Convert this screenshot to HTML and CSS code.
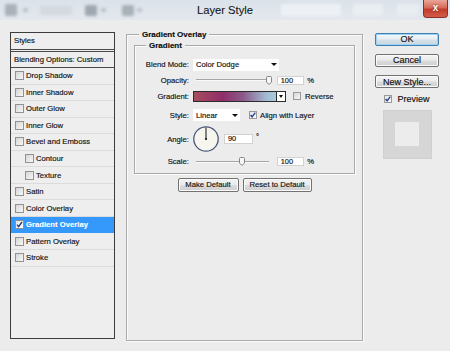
FILE: index.html
```html
<!DOCTYPE html>
<html>
<head>
<meta charset="utf-8">
<title>Layer Style</title>
<link rel="stylesheet" href="styles.css">
</head>
<body>
<div class="titlebar">
  <div class="tb-left">
    <span class="blob b1"></span><span class="blob b2"></span><span class="blob b3"></span><span class="blob b4"></span><span class="blob b5"></span><span class="blob b6"></span><span class="blob b7"></span>
  </div>
  <div class="title">Layer Style</div>
  <div class="tb-right">
    <span class="glow g1"></span><span class="glow g2"></span><span class="glow g3"></span>
    <div class="close">x</div>
  </div>
</div>

<div class="main">
  <div class="styles-panel">
    <div class="sp-head">Styles</div>
    <div class="sp-blend">Blending Options: Custom</div>
    <ul class="sp-list">
      <li class="sp-item"><span class="cb"></span>Drop Shadow</li>
      <li class="sp-item"><span class="cb"></span>Inner Shadow</li>
      <li class="sp-item"><span class="cb"></span>Outer Glow</li>
      <li class="sp-item"><span class="cb"></span>Inner Glow</li>
      <li class="sp-item"><span class="cb"></span>Bevel and Emboss</li>
      <li class="sp-item sub"><span class="cb"></span>Contour</li>
      <li class="sp-item sub"><span class="cb"></span>Texture</li>
      <li class="sp-item"><span class="cb"></span>Satin</li>
      <li class="sp-item"><span class="cb"></span>Color Overlay</li>
      <li class="sp-item sel"><span class="cb on"><svg width="9" height="9" viewBox="0 0 9 9"><path d="M2 4.6 L3.6 6.6 L7 2" fill="none" stroke="#23398a" stroke-width="1.4"/></svg></span>Gradient Overlay</li>
      <li class="sp-item"><span class="cb"></span>Pattern Overlay</li>
      <li class="sp-item"><span class="cb"></span>Stroke</li>
    </ul>
  </div>

  <fieldset class="group outer">
    <legend>Gradient Overlay</legend>
    <fieldset class="group inner">
      <legend>Gradient</legend>
      <div class="frow r1">
        <span class="flabel">Blend Mode:</span>
        <div class="select blend"><span>Color Dodge</span><span class="arrow"></span></div>
      </div>
      <div class="frow r2">
        <span class="flabel">Opacity:</span>
        <div class="slider"><span class="track"></span><span class="thumb" style="left:95.4%"><svg width="6" height="9" viewBox="0 0 6 9"><path d="M0.5 1.5 Q0.5 0.5 1.5 0.5 H4.5 Q5.5 0.5 5.5 1.5 V6.2 L3 8.4 L0.5 6.2 Z" fill="#f6f6f6" stroke="#7a7a7a" stroke-width="0.9"/></svg></span></div>
        <span class="num">100</span><span class="unit">%</span>
      </div>
      <div class="frow r3">
        <span class="flabel">Gradient:</span>
        <div class="grad"></div><div class="grad-drop"><span class="arrow"></span></div>
        <span class="cb small rev"></span><span class="cbl">Reverse</span>
      </div>
      <div class="frow r4">
        <span class="flabel">Style:</span>
        <div class="select style"><span>Linear</span><span class="arrow"></span></div>
        <span class="cb small on align"><svg width="8" height="8" viewBox="0 0 8 8"><path d="M1.6 4 L3.1 5.9 L6.3 1.6" fill="none" stroke="#23398a" stroke-width="1.3"/></svg></span><span class="cbl">Align with Layer</span>
      </div>
      <div class="frow r5">
        <span class="flabel">Angle:</span>
        <svg class="dial" width="26" height="26" viewBox="0 0 26 26"><circle cx="13" cy="13" r="12.2" fill="#f6f6ee" stroke="#4b587a" stroke-width="1.3"/><line x1="13" y1="13" x2="13" y2="1.6" stroke="#111" stroke-width="1"/><circle cx="13" cy="13" r="1.1" fill="#111"/></svg>
        <span class="num angle">90</span><span class="deg">°</span>
      </div>
      <div class="frow r6">
        <span class="flabel">Scale:</span>
        <div class="slider"><span class="track"></span><span class="thumb" style="left:61%"><svg width="6" height="9" viewBox="0 0 6 9"><path d="M0.5 1.5 Q0.5 0.5 1.5 0.5 H4.5 Q5.5 0.5 5.5 1.5 V6.2 L3 8.4 L0.5 6.2 Z" fill="#f6f6f6" stroke="#7a7a7a" stroke-width="0.9"/></svg></span></div>
        <span class="num">100</span><span class="unit">%</span>
      </div>
    </fieldset>
    <div class="btnrow">
      <button class="btn md">Make Default</button>
      <button class="btn rd">Reset to Default</button>
    </div>
  </fieldset>

  <div class="side">
    <button class="btn big ok">OK</button>
    <button class="btn big">Cancel</button>
    <button class="btn big">New Style...</button>
    <div class="preview"><span class="cb small on"><svg width="8" height="8" viewBox="0 0 8 8"><path d="M1.6 4 L3.1 5.9 L6.3 1.6" fill="none" stroke="#23398a" stroke-width="1.3"/></svg></span><span>Preview</span></div>
    <div class="swatch"><div class="swatch-inner"></div></div>
  </div>
</div>
</body>
</html>
```

FILE: styles.css
```css
* { box-sizing: border-box; margin: 0; padding: 0; }
html, body { width: 450px; height: 351px; overflow: hidden; }
body {
  background: #ececec;
  font-family: "Liberation Sans", Arial, sans-serif;
  font-size: 7.7px;
  color: #111;
  -webkit-text-stroke: 0.15px #111;
}

/* title bar */
.titlebar {
  height: 20px;
  background: linear-gradient(#dbe2e9, #e3e8ee);
  display: grid;
  grid-template-columns: 1fr auto 1fr;
  overflow: hidden;
}
.tb-left {
  display: flex;
  align-items: center;
  height: 20px;
  padding-left: 5px;
  filter: blur(1.4px);
}
.blob { display: block; background: #a9b1b9; border-radius: 2px; }
.b1 { width: 12px; height: 12px; }
.b2 { width: 5px; height: 4px; margin-left: 6px; background: #b4bbc2; }
.b3 { width: 32px; height: 9px; margin-left: 12px; background: #d3d9df; }
.b4 { width: 12px; height: 11px; margin-left: 13px; background: #9fa8b0; }
.b5 { width: 5px; height: 4px; margin-left: 4px; background: #b4bbc2; }
.b6 { width: 12px; height: 11px; margin-left: 16px; background: #a8b0b8; }
.b7 { width: 5px; height: 4px; margin-left: 3px; background: #b8bfc6; }
.title {
  font-size: 11.2px;
  line-height: 21px;
  color: #161616;
  padding: 0 1px;
  -webkit-text-stroke: 0.1px #161616;
}
.tb-right {
  display: flex;
  align-items: flex-start;
  height: 20px;
}
.glow { display: block; height: 12px; margin-top: 4px; background: #edf1f5; filter: blur(1.6px); border-radius: 2px; }
.g1 { width: 60px; margin-left: 27px; }
.g2 { width: 30px; margin-left: 12px; background: #e9eef2; }
.g3 { width: 22px; margin-left: 14px; background: #e8edf2; }
.close {
  width: 25px;
  height: 18px;
  margin-left: auto;
  margin-right: 2px;
  background: linear-gradient(#e9a798, #d86a58 45%, #c23b2c 55%, #d25c48);
  border: 1px solid #8c3026;
  border-top: none;
  border-radius: 0 0 4px 4px;
  color: #fff;
  font: bold 10px "Liberation Sans", Arial, sans-serif;
  -webkit-text-stroke: 0;
  display: flex;
  align-items: center;
  justify-content: center;
  padding-bottom: 2px;
  text-shadow: 0 0 2px #7a1a10;
}

/* main */
.main {
  display: flex;
  align-items: flex-start;
  padding: 10px 0 0 10px;
}

/* styles list */
.styles-panel {
  width: 105px;
  height: 307px;
  margin-top: 2px;
  border: 1px solid #3c3c3c;
  background: #eeeeee;
}
.sp-head {
  height: 17px;
  border-bottom: 1px solid #4a4a4a;
  line-height: 16px;
  padding-left: 3px;
}
.sp-blend {
  margin-top: 1px;
  height: 17px;
  border-top: 1px solid #4a4a4a;
  border-bottom: 1px solid #4a4a4a;
  line-height: 15px;
  padding-left: 3px;
}
.sp-list { list-style: none; }
.sp-item {
  height: 16.55px;
  border-bottom: 1px solid #dbdbdb;
  display: flex;
  align-items: center;
  gap: 2px;
  padding-left: 4px;
}
.sp-item.sub { padding-left: 14px; }
.sp-item.sel {
  background: #3598fb;
  border-bottom-color: #3598fb;
  color: #fff;
  -webkit-text-stroke: 0.1px #fff;
  font-weight: bold;
}

/* checkboxes */
.cb {
  display: inline-flex;
  align-items: center;
  justify-content: center;
  width: 9px;
  height: 9px;
  flex: none;
  border: 1px solid #929292;
  background: linear-gradient(135deg, #d6d6d6, #f7f7f7);
}
.cb svg { display: block; margin: -1px; }
.cb.on { background: linear-gradient(135deg, #e4e4e4, #ffffff); }
.cb.small { width: 8px; height: 8px; border-color: #9a9a9a; }
.cbl { margin-left: 3px; }

/* group boxes */
.group {
  border: 1px solid #aaaaaa;
  box-shadow: inset 1px 1px 0 #fbfbfb, 1px 1px 0 #fbfbfb;
  min-width: 0;
}
.group > legend {
  font-weight: bold;
  font-size: 8px;
  line-height: 9px;
  padding: 0 3px;
  background: #ececec;
  color: #0d0d0d;
}
.outer {
  width: 237px;
  height: 311px;
  margin-left: 11px;
  padding: 2px 7px 0;
}
.outer > legend { margin-left: 5px; }
.inner {
  height: 133px;
  padding: 7.5px 0 0 0;
}
.inner > legend { margin-left: 11px; }

/* form rows */
.frow { display: flex; align-items: center; }
.r1 { height: 14.5px; }
.r2 { height: 16.5px; }
.r3 { height: 15.5px; }
.r4 { height: 22px; }
.r5 { height: 26px; }
.r6 { height: 19px; }
.flabel {
  width: 54px;
  margin-right: 4px;
  text-align: right;
  flex: none;
}

.select {
  background: #fff;
  height: 12.5px;
  display: flex;
  align-items: center;
  justify-content: space-between;
  padding: 0 2px 0 3px;
}
.select.blend { width: 86px; }
.select.style { width: 47px; margin-right: 9px; }
.arrow {
  display: block;
  width: 0;
  height: 0;
  border-left: 3px solid transparent;
  border-right: 3px solid transparent;
  border-top: 3.5px solid #111;
}

.slider { position: relative; width: 80px; height: 10px; margin-right: 3.7px; flex: none; }
.track {
  position: absolute;
  left: 3px;
  right: 4px;
  top: 4px;
  height: 2px;
  border-top: 1px solid #a6a6a6;
  border-bottom: 1px solid #fafafa;
}
.thumb { position: absolute; top: 0.5px; margin-left: -3px; line-height: 0; }

.num {
  display: block;
  width: 27px;
  height: 9.5px;
  background: #fff;
  border: 1px solid #d2d2d2;
  line-height: 8px;
  padding-left: 3px;
  font-size: 7.4px;
}
.unit { margin-left: 3.5px; }

.grad {
  width: 84px;
  height: 11px;
  border: 1px solid #2c2c2c;
  background: linear-gradient(to right, #a64c5f 0%, #8f2d69 35%, #8c5a8a 60%, #a1bcd2 88%, #a9cadb 100%);
}
.grad-drop {
  width: 9px;
  height: 11px;
  border: 1px solid #2c2c2c;
  border-left: none;
  background: #fff;
  display: flex;
  align-items: center;
  justify-content: center;
  margin-right: 7px;
}
.grad-drop .arrow { border-left-width: 2.5px; border-right-width: 2.5px; border-top-width: 3px; }
.cb.rev + .cbl { margin-left: 4px; }

.dial { display: block; margin-right: 5px; flex: none; }
.num.angle { width: 29px; height: 10px; margin-bottom: 1px; }
.deg { margin-left: 3px; align-self: flex-start; margin-top: 6px; }

/* buttons */
.btn {
  display: flex;
  align-items: center;
  justify-content: center;
  height: 14px;
  font-family: "Liberation Sans", Arial, sans-serif;
  font-size: 7.7px;
  color: #111;
  -webkit-text-stroke: 0.15px #111;
  border: 1px solid #727272;
  border-radius: 2px;
  background: linear-gradient(#f3f3f3 0%, #ebebeb 48%, #dcdcdc 52%, #cfcfcf 100%);
  box-shadow: inset 0 0 0 1px #fbfbfb;
}
.btnrow {
  display: flex;
  justify-content: center;
  gap: 4px;
  margin-top: 3.7px;
}
.btn.md { width: 61px; }
.btn.rd { width: 69px; }

.side {
  width: 64px;
  margin-left: 12px;
  margin-top: 3px;
  display: flex;
  flex-direction: column;
  align-items: center;
}
.btn.big { width: 64px; height: 12.5px; font-size: 9px; }
.btn.big + .btn.big { margin-top: 8.7px; }
.btn.ok {
  border-color: #3b7fb3;
  box-shadow: inset 0 0 0 1px #9fd2f2;
  background: linear-gradient(#f2f7fa 0%, #e7eef3 48%, #d5dfe6 52%, #cbd8e1 100%);
}
.preview {
  display: flex;
  align-items: center;
  gap: 5px;
  height: 11px;
  margin-top: 6px;
  font-size: 9px;
}
.swatch {
  width: 49px;
  height: 49px;
  margin-top: 5px;
  background: #d6d6d6;
  border: 1px solid #d0d0d0;
  display: flex;
  align-items: center;
  justify-content: center;
}
.swatch-inner { width: 24px; height: 24px; background: #ececec; }
```
